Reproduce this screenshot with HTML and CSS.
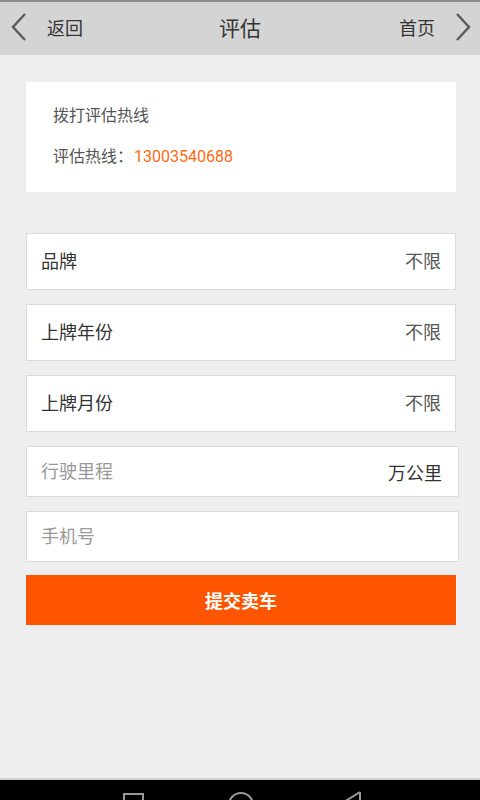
FILE: index.html
```html
<!DOCTYPE html>
<html lang="zh-CN">

<head>
    <meta charset="UTF-8">
    <title>评估</title>
    <link rel="stylesheet" href="styles.css">
</head>

<body>

    <div class="topbar">
        <a class="nav-btn back">
            <svg width="18" height="30" viewBox="0 0 18 30"><polyline points="15,2 3,15 15,28" fill="none" stroke="#5a5a5a" stroke-width="2.4"/></svg>
            <span>返回</span>
        </a>
        <div class="title">评估</div>
        <a class="nav-btn home">
            <span>首页</span>
            <svg width="18" height="30" viewBox="0 0 18 30"><polyline points="3,2 15,15 3,28" fill="none" stroke="#5a5a5a" stroke-width="2.4"/></svg>
        </a>
    </div>

    <div class="content">
        <div class="hotline">
            <p>拨打评估热线</p>
            <p>评估热线：<span class="phone">13003540688</span></p>
        </div>

        <div class="form">
            <div class="row select"><span class="label">品牌</span><span class="value">不限</span></div>
            <div class="row select"><span class="label">上牌年份</span><span class="value">不限</span></div>
            <div class="row select"><span class="label">上牌月份</span><span class="value">不限</span></div>
            <div class="row field">
                <input type="text" placeholder="行驶里程">
                <span class="unit">万公里</span>
            </div>
            <div class="row field">
                <input type="tel" placeholder="手机号">
            </div>
            <button class="submit">提交卖车</button>
        </div>
    </div>

    <div class="sysbar">
        <svg width="480" height="20" viewBox="0 0 480 20">
            <rect x="124" y="14" width="19" height="19" fill="none" stroke="#9a9a9a" stroke-width="2"/>
            <circle cx="241" cy="25" r="12" fill="none" stroke="#9a9a9a" stroke-width="2"/>
            <polyline points="360,12 344,22 360,32" fill="none" stroke="#9a9a9a" stroke-width="2"/>
            <line x1="360" y1="12" x2="360" y2="32" stroke="#9a9a9a" stroke-width="2"/>
        </svg>
    </div>

</body>

</html>
```

FILE: styles.css
```css
* {
    box-sizing: border-box;
}

body {
    margin: 0;
    width: 480px;
    height: 800px;
    display: flex;
    flex-direction: column;
    background: #eeeeee;
    font-family: Roboto, "Noto Sans CJK SC", sans-serif;
    color: #333;
}

.topbar {
    height: 55px;
    border-top: 2px solid #8c8c8c;
    background: #d4d4d4;
    display: flex;
    align-items: center;
    justify-content: space-between;
    padding: 0 8px 3px 10px;
    position: relative;
}

.nav-btn {
    display: flex;
    align-items: center;
    gap: 19px;
    font-size: 18px;
    color: #333;
}

.home {
    gap: 19px;
}

.title {
    position: absolute;
    left: 0;
    right: 0;
    top: 10px;
    text-align: center;
    font-size: 21px;
    color: #333;
    pointer-events: none;
}

.content {
    flex: 1;
    padding: 27px 24px 0 26px;
}

.hotline {
    width: 430px;
    height: 110px;
    background: #fff;
    padding: 22px 27px 0;
    font-size: 16px;
    color: #555;
}

.hotline p {
    margin: 0 0 17px;
    line-height: 24px;
}

.phone {
    color: #ff6a13;
    margin-left: 1px;
}

.form {
    margin-top: 41px;
    display: flex;
    flex-direction: column;
    gap: 14px;
}

.row {
    display: flex;
    align-items: center;
    justify-content: space-between;
    background: #fff;
    border: 1px solid #dcdcdc;
    padding: 0 14px;
    font-size: 18px;
}

.select {
    width: 430px;
    height: 57px;
    padding-bottom: 4px;
}

.value {
    color: #555;
}

.field {
    width: 433px;
    height: 51px;
    padding-right: 16px;
}

.field input {
    flex: 1;
    border: none;
    outline: none;
    padding: 0;
    font-family: inherit;
    font-size: 18px;
    color: #333;
    background: transparent;
}

.field input::placeholder {
    color: #999;
}

.unit {
    color: #333;
}

.submit {
    width: 430px;
    height: 50px;
    margin-top: -1px;
    border: none;
    background: #ff5500;
    color: #fff;
    font-family: inherit;
    font-size: 18px;
    font-weight: bold;
    cursor: pointer;
}

.sysbar {
    height: 22px;
    border-top: 2px solid #d0d0d0;
    background: #000;
    overflow: hidden;
}

.sysbar svg {
    display: block;
}
```
